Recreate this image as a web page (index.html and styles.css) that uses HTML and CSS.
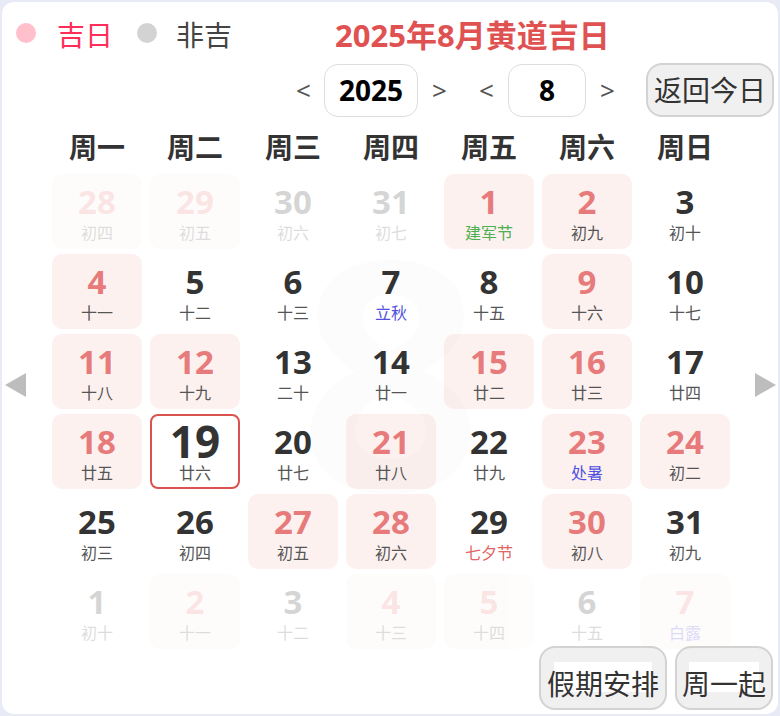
FILE: index.html
```html
<!DOCTYPE html>
<html lang="zh-CN">
<head>
<meta charset="utf-8">
<title>2025年8月黄道吉日</title>
<link rel="stylesheet" href="styles.css">
</head>
<body>
<div class="card">
  <div class="top">
    <div class="legend">
      <span class="dot dot-good"></span><span class="legend-text legend-good">吉日</span>
      <span class="dot dot-bad"></span><span class="legend-text legend-bad">非吉</span>
    </div>
    <h1 class="title">2025年8月黄道吉日</h1>
  </div>
  <div class="controls">
    <span class="arrow">&lt;</span>
    <div class="box year">2025</div>
    <span class="arrow">&gt;</span>
    <span class="arrow arrow-gap">&lt;</span>
    <div class="box month">8</div>
    <span class="arrow">&gt;</span>
    <button class="btn btn-today">返回今日</button>
  </div>
  <div class="body">
    <div class="side side-left">
      <svg width="21" height="24" viewBox="0 0 21 24"><polygon points="21,0 0,12 21,24" fill="#bdbdbd"/></svg>
    </div>
    <div class="cal">
      <div class="weekdays">
        <span>周一</span><span>周二</span><span>周三</span><span>周四</span><span>周五</span><span>周六</span><span>周日</span>
      </div>
      <div class="grid-wrap">
        <div class="watermark" aria-hidden="true">8</div>
        <div class="grid">
          <div class="cell good out"><span class="num">28</span><span class="lunar">初四</span></div>
          <div class="cell good out"><span class="num">29</span><span class="lunar">初五</span></div>
          <div class="cell out"><span class="num">30</span><span class="lunar">初六</span></div>
          <div class="cell out"><span class="num">31</span><span class="lunar">初七</span></div>
          <div class="cell good"><span class="num">1</span><span class="lunar green">建军节</span></div>
          <div class="cell good"><span class="num">2</span><span class="lunar">初九</span></div>
          <div class="cell"><span class="num">3</span><span class="lunar">初十</span></div>

          <div class="cell good"><span class="num">4</span><span class="lunar">十一</span></div>
          <div class="cell"><span class="num">5</span><span class="lunar">十二</span></div>
          <div class="cell"><span class="num">6</span><span class="lunar">十三</span></div>
          <div class="cell"><span class="num">7</span><span class="lunar blue">立秋</span></div>
          <div class="cell"><span class="num">8</span><span class="lunar">十五</span></div>
          <div class="cell good"><span class="num">9</span><span class="lunar">十六</span></div>
          <div class="cell"><span class="num">10</span><span class="lunar">十七</span></div>

          <div class="cell good"><span class="num">11</span><span class="lunar">十八</span></div>
          <div class="cell good"><span class="num">12</span><span class="lunar">十九</span></div>
          <div class="cell"><span class="num">13</span><span class="lunar">二十</span></div>
          <div class="cell"><span class="num">14</span><span class="lunar">廿一</span></div>
          <div class="cell good"><span class="num">15</span><span class="lunar">廿二</span></div>
          <div class="cell good"><span class="num">16</span><span class="lunar">廿三</span></div>
          <div class="cell"><span class="num">17</span><span class="lunar">廿四</span></div>

          <div class="cell good"><span class="num">18</span><span class="lunar">廿五</span></div>
          <div class="cell today"><span class="num">19</span><span class="lunar">廿六</span></div>
          <div class="cell"><span class="num">20</span><span class="lunar">廿七</span></div>
          <div class="cell good"><span class="num">21</span><span class="lunar">廿八</span></div>
          <div class="cell"><span class="num">22</span><span class="lunar">廿九</span></div>
          <div class="cell good"><span class="num">23</span><span class="lunar blue">处暑</span></div>
          <div class="cell good"><span class="num">24</span><span class="lunar">初二</span></div>

          <div class="cell"><span class="num">25</span><span class="lunar">初三</span></div>
          <div class="cell"><span class="num">26</span><span class="lunar">初四</span></div>
          <div class="cell good"><span class="num">27</span><span class="lunar">初五</span></div>
          <div class="cell good"><span class="num">28</span><span class="lunar">初六</span></div>
          <div class="cell"><span class="num">29</span><span class="lunar red">七夕节</span></div>
          <div class="cell good"><span class="num">30</span><span class="lunar">初八</span></div>
          <div class="cell"><span class="num">31</span><span class="lunar">初九</span></div>

          <div class="cell out"><span class="num">1</span><span class="lunar">初十</span></div>
          <div class="cell good out"><span class="num">2</span><span class="lunar">十一</span></div>
          <div class="cell out"><span class="num">3</span><span class="lunar">十二</span></div>
          <div class="cell good out"><span class="num">4</span><span class="lunar">十三</span></div>
          <div class="cell good out"><span class="num">5</span><span class="lunar">十四</span></div>
          <div class="cell out"><span class="num">6</span><span class="lunar">十五</span></div>
          <div class="cell good out"><span class="num">7</span><span class="lunar blue">白露</span></div>
        </div>
      </div>
    </div>
    <div class="side side-right">
      <svg width="21" height="24" viewBox="0 0 21 24"><polygon points="0,0 21,12 0,24" fill="#bdbdbd"/></svg>
    </div>
  </div>
  <div class="footer">
    <button class="btn btn-foot foot-a"><span>假期安排</span></button>
    <button class="btn btn-foot foot-b"><span>周一起</span></button>
  </div>
</div>
</body>
</html>
```

FILE: styles.css
```css
* { box-sizing: border-box; }
html, body { margin: 0; padding: 0; }
body {
  background: #e8eaf5;
  width: 780px;
  height: 716px;
  overflow: hidden;
  font-family: "Noto Sans", "Noto Sans CJK SC", sans-serif;
}
.card {
  margin: 2px;
  width: 776px;
  height: 712px;
  background: #fff;
  border-radius: 12px;
  display: flex;
  flex-direction: column;
}
.top {
  height: 61px;
  display: flex;
  align-items: flex-start;
  padding: 13px 0 0 14px;
}
.legend {
  display: flex;
  align-items: center;
  height: 40px;
}
.dot {
  width: 20px;
  height: 20px;
  border-radius: 50%;
  margin-bottom: 4px;
}
.dot-good { background: #ffc0cb; }
.dot-bad { background: #d3d3d3; margin-left: 24px; }
.legend-text { font-size: 28px; line-height: 40px; }
.legend-good { color: #ff2d5a; margin-left: 21px; }
.legend-bad { color: #444; margin-left: 19px; }
.title {
  margin: 0 0 0 103px;
  font-size: 31px;
  line-height: 40px;
  font-weight: 700;
  color: #e05252;
}
.controls {
  height: 54px;
  display: flex;
  align-items: center;
  justify-content: flex-end;
  padding-right: 4px;
}
.arrow {
  width: 14px;
  font-size: 26px;
  line-height: 1;
  color: #555;
  text-align: center;
}
.arrow-gap { margin-left: 33px; }
.box {
  height: 53px;
  border: 1px solid #dddddd;
  border-radius: 14px;
  display: flex;
  align-items: center;
  justify-content: center;
  font-size: 28px;
  font-weight: 700;
  color: #000;
}
.year { width: 94px; margin: 0 14px; }
.month { width: 78px; margin: 0 14px 0 15px; }
.btn {
  background: #f0f0f0;
  border: 2px solid #d3d3d3;
  border-radius: 16px;
  font-family: inherit;
  font-size: 28px;
  color: #333;
  padding: 0;
}
.btn-today {
  margin-left: 32px;
  width: 128px;
  height: 54px;
  line-height: 1;
}
.body {
  display: flex;
  margin-top: 10px;
}
.side {
  display: flex;
  align-items: center;
  padding-bottom: 6px;
}
.side-left { width: 50px; padding-left: 3px; }
.side-right { width: 48px; padding-left: 25px; }
.cal { width: 678px; }
.weekdays {
  display: grid;
  grid-template-columns: repeat(7, 90px);
  column-gap: 8px;
  height: 40px;
  align-items: center;
}
.weekdays span {
  text-align: center;
  font-size: 28px;
  font-weight: 700;
  line-height: 40px;
  color: #333;
}
.grid-wrap {
  position: relative;
  margin-top: 7px;
}
.watermark {
  position: absolute;
  left: 0;
  right: 0;
  top: 33px;
  text-align: center;
  font-size: 320px;
  line-height: 320px;
  font-weight: 700;
  color: rgba(0, 0, 0, 0.012);
}
.grid {
  position: relative;
  display: grid;
  grid-template-columns: repeat(7, 90px);
  grid-auto-rows: 75px;
  gap: 5px 8px;
}
.cell {
  border-radius: 10px;
  display: flex;
  flex-direction: column;
  align-items: center;
  padding-top: 9px;
}
.num {
  font-size: 33px;
  line-height: 37px;
  font-weight: 700;
  color: #333;
}
.lunar {
  font-size: 16px;
  line-height: 20px;
  margin-top: 3px;
  color: #555;
}
.good { background: rgba(235, 115, 105, 0.1); }
.good .num { color: #e77b7b; }
.out { opacity: 0.2; }
.today {
  border: 2px solid #d9534f;
  border-radius: 8px;
  padding-top: 7px;
}
.today .num { font-size: 44px; }
.green { color: #4caf50; }
.blue { color: #5050e0; }
.red { color: #e06666; }
.footer {
  display: flex;
  justify-content: flex-end;
  gap: 8px;
  padding-right: 5px;
  margin-top: -3px;
}
.btn-foot {
  height: 64px;
  display: flex;
  align-items: flex-end;
  justify-content: center;
  padding-bottom: 10px;
}
.btn-foot span {
  line-height: 28px;
  padding-top: 8px;
  background: linear-gradient(#fff, #fff) no-repeat center top / calc(100% - 14px) 30px;
}
.foot-a { width: 128px; }
.foot-b { width: 98px; }
```
